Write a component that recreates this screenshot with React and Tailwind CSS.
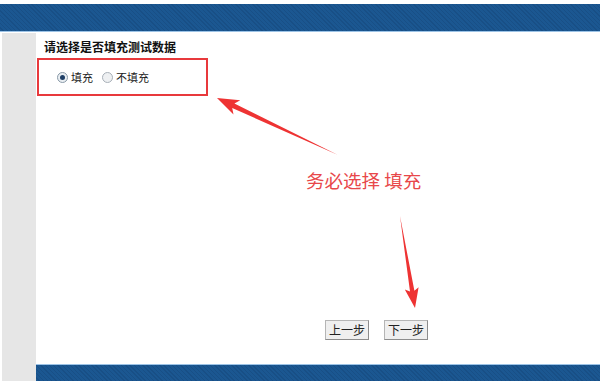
export default function App() {
  const font = { fontFamily: '"Noto Sans CJK SC", "Noto Sans", sans-serif' };
  return (
    <div className="relative w-[600px] h-[384px] bg-white overflow-hidden flex flex-col" style={font}>
      <div className="h-[4px]" />
      <div className="h-[28px] bg-[#1b5791] bg-[repeating-linear-gradient(45deg,#1b5791_0px,#1b5791_2px,#184f86_2px,#184f86_3px)] border-b border-[#9cc3e6]" />
      <div className="h-[1px]" />
      <div className="flex flex-1 pb-[3px]">
        <div className="w-[34px] ml-[2px] bg-[#e6e6e6]" />
        <div className="flex-1 flex flex-col">
          <div className="pt-[6px] pl-[8px] text-[12px] font-bold leading-[16px] text-[#111]">
            请选择是否填充测试数据
          </div>
          <div className="mt-[3px] ml-[1px] w-[171px] h-[38px] border-2 border-[#e8393c] flex items-center pl-[18px] text-[11px] text-[#222]">
            <span className="w-[11px] h-[11px] rounded-full border border-[#8a9aa8] bg-[#e9eef2] flex items-center justify-center">
              <span className="w-[5px] h-[5px] rounded-full bg-[#1f3f66]" />
            </span>
            <span className="ml-[3px]">填充</span>
            <span className="ml-[9px] w-[11px] h-[11px] rounded-full border border-[#a8b0b8] bg-[#eef0f2]" />
            <span className="ml-[3px]">不填充</span>
          </div>
          <div className="flex-1" />
          <div className="flex gap-[15px] pl-[289px] mb-[24px]">
            <button className="w-[44px] h-[20px] bg-[#efefef] border border-[#b5b5b5] border-b-[#8c8c8c] border-r-[#8c8c8c] text-[12px] leading-none text-[#222]">上一步</button>
            <button className="w-[44px] h-[20px] bg-[#efefef] border border-[#b5b5b5] border-b-[#8c8c8c] border-r-[#8c8c8c] text-[12px] leading-none text-[#222]">下一步</button>
          </div>
          <div className="h-[17px] bg-[#1b5791] bg-[repeating-linear-gradient(45deg,#1b5791_0px,#1b5791_2px,#184f86_2px,#184f86_3px)] border-t border-[#9cc3e6]" />
        </div>
      </div>
      <svg className="absolute inset-0 pointer-events-none" width="600" height="384">
        <polygon fill="#ee3333" points="217,98 240.3,100.2 234.4,103.4 338,155 232.2,108 233.5,114.6" />
        <polygon fill="#ee3333" points="415,308 418.6,287.2 414.4,290.8 400,216 410,291.6 404.8,289.4" />
      </svg>
      <div className="absolute left-[306px] top-[169px] text-[18.5px] leading-[22px] text-[#e8474a] whitespace-pre">务必选择 填充</div>
    </div>
  );
}
